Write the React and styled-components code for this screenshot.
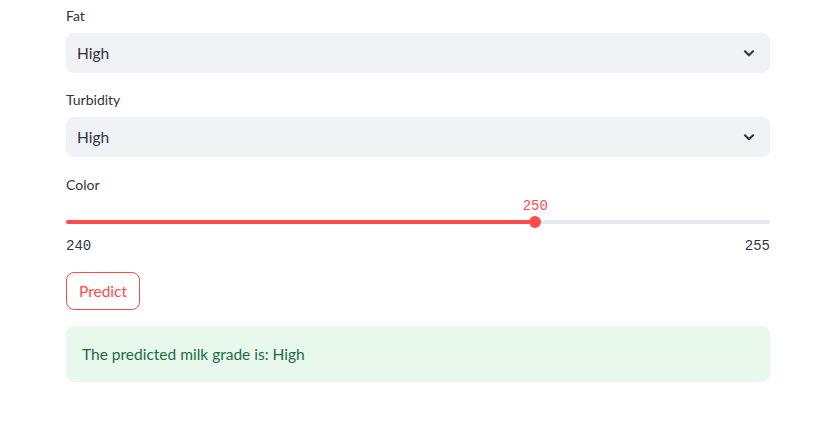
import styled, { createGlobalStyle } from 'styled-components';

const GlobalStyle = createGlobalStyle`
  body {
    margin: 0;
    background: #ffffff;
    font-family: Lato, "Noto Sans", sans-serif;
    color: #31333f;
  }
`;

const Page = styled.div`
  width: 704px;
  margin: 0 auto 0 66px;
  padding-top: 5px;
  display: flex;
  flex-direction: column;
  gap: 16px;
`;

const Field = styled.div`
  display: flex;
  flex-direction: column;
  margin-top: ${({ $offset }) => $offset || 0}px;
`;

const Label = styled.label`
  font-size: 14px;
  line-height: 22px;
  margin-bottom: 6px;
  color: #31333f;
`;

const SelectBox = styled.div`
  height: 40px;
  border-radius: 8px;
  background: #f0f2f6;
  display: flex;
  align-items: center;
  justify-content: space-between;
  padding: 0 14px 0 11px;
  font-size: 15.5px;
  color: #31333f;
`;

const SliderArea = styled.div`
  position: relative;
  height: 54px;
`;

const Track = styled.div`
  position: relative;
  margin-top: 18px;
  height: 4px;
  border-radius: 2px;
  background: #e5e9f0;
`;

const Fill = styled.div`
  height: 100%;
  border-radius: 2px;
  background: #ff4b4b;
`;

const Thumb = styled.div`
  position: absolute;
  top: 50%;
  width: 12px;
  height: 12px;
  border-radius: 50%;
  background: #ff4b4b;
  transform: translate(-50%, -50%);
`;

const ThumbValue = styled.div`
  position: absolute;
  bottom: 8px;
  transform: translateX(-50%);
  font-family: "Liberation Mono", "DejaVu Sans Mono", monospace;
  font-size: 14px;
  line-height: 20px;
  color: #ff4b4b;
`;

const TickRow = styled.div`
  margin-top: 12px;
  display: flex;
  justify-content: space-between;
  font-family: "Liberation Mono", "DejaVu Sans Mono", monospace;
  font-size: 14px;
  line-height: 20px;
  color: #31333f;
`;

const Button = styled.button`
  align-self: flex-start;
  height: 38px;
  padding: 0 12px;
  border: 1px solid #ff4b4b;
  border-radius: 8px;
  background: #ffffff;
  color: #ff4b4b;
  font-family: inherit;
  font-size: 15.5px;
  cursor: pointer;
`;

const Alert = styled.div`
  padding: 16px;
  border-radius: 8px;
  background: #e8f8ed;
  color: #1a6b45;
  font-size: 15.5px;
  line-height: 24px;
`;

const Chevron = () => (
  <svg width="14" height="14" viewBox="0 0 24 24" fill="none" stroke="#31333f" strokeWidth="3.5" strokeLinecap="round" strokeLinejoin="round">
    <path d="M5 9l7 7 7-7" />
  </svg>
);

function Select({ label, value }) {
  return (
    <Field>
      <Label>{label}</Label>
      <SelectBox>
        <span>{value}</span>
        <Chevron />
      </SelectBox>
    </Field>
  );
}

function Slider({ label, min, max, value }) {
  const pct = ((value - min) / (max - min)) * 100;
  return (
    <Field $offset={1}>
      <Label>{label}</Label>
      <SliderArea>
        <Track>
          <Fill style={{ width: `${pct}%` }} />
          <Thumb style={{ left: `${pct}%` }} />
          <ThumbValue style={{ left: `${pct}%` }}>{value}</ThumbValue>
        </Track>
        <TickRow>
          <span>{min}</span>
          <span>{max}</span>
        </TickRow>
      </SliderArea>
    </Field>
  );
}

export default function App() {
  return (
    <>
      <GlobalStyle />
      <Page>
        <Select label="Fat" value="High" />
        <Select label="Turbidity" value="High" />
        <Slider label="Color" min={240} max={255} value={250} />
        <Button>Predict</Button>
        <Alert>The predicted milk grade is: High</Alert>
      </Page>
    </>
  );
}
